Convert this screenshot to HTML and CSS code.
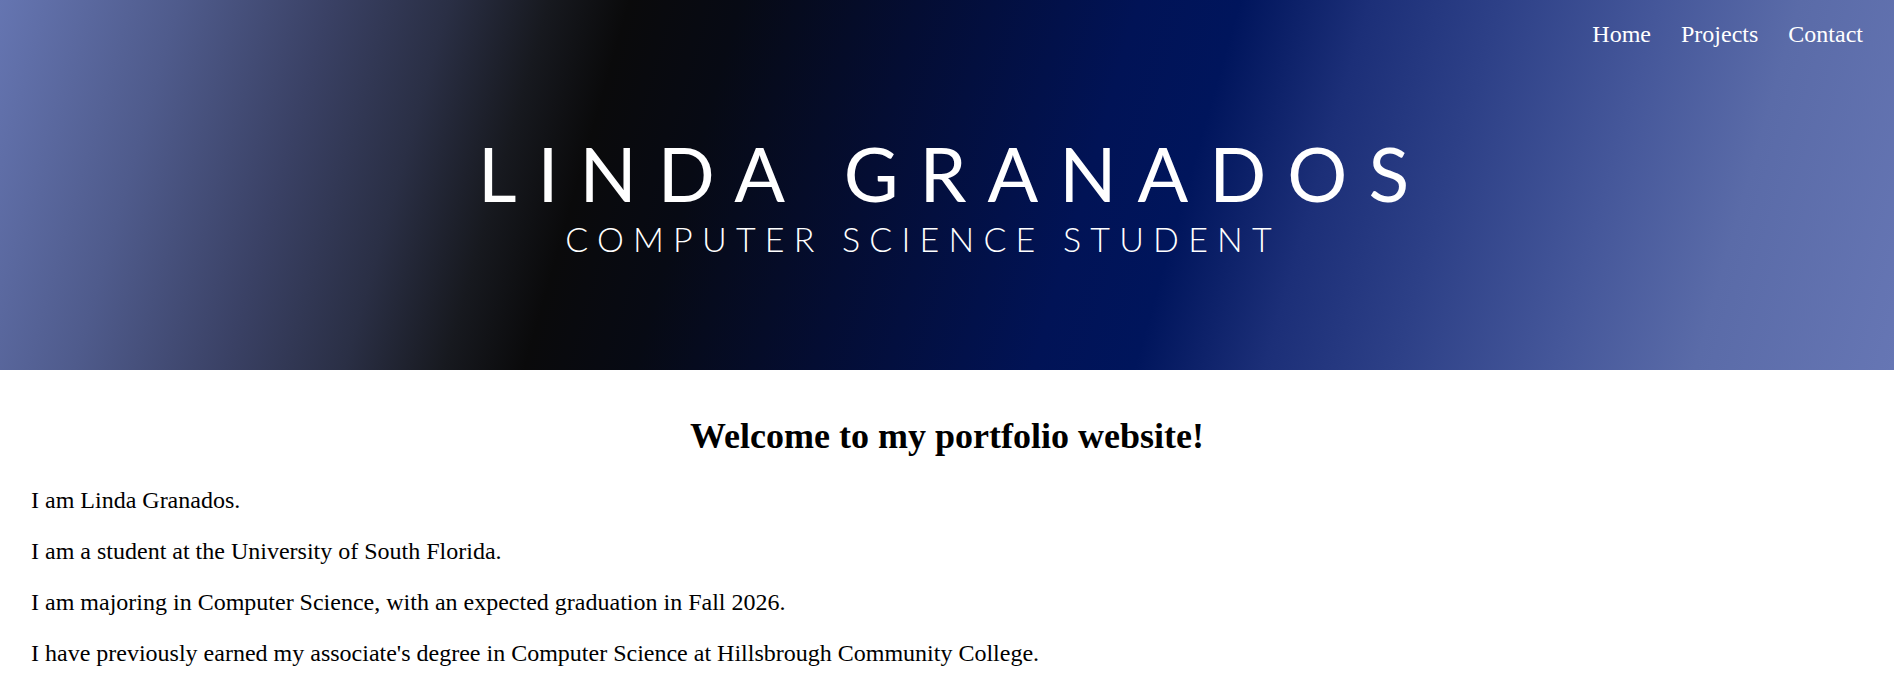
FILE: index.html
```html
<!DOCTYPE html>
<html lang="en">
<head>
<meta charset="utf-8">
<title>Linda Granados</title>
<link rel="stylesheet" href="styles.css">
</head>
<body>
<header class="hero">
  <nav class="nav">
    <a class="nav-link" href="#">Home</a>
    <a class="nav-link" href="#">Projects</a>
    <a class="nav-link" href="#">Contact</a>
  </nav>
  <div class="hero-text">
    <div class="hero-name">LINDA GRANADOS</div>
    <div class="hero-role">COMPUTER SCIENCE STUDENT</div>
  </div>
</header>
<main class="content">
  <h1 class="welcome">Welcome to my portfolio website!</h1>
  <p class="line">I am Linda Granados.</p>
  <p class="line">I am a student at the University of South Florida.</p>
  <p class="line">I am majoring in Computer Science, with an expected graduation in Fall 2026.</p>
  <p class="line">I have previously earned my associate's degree in Computer Science at Hillsbrough Community College.</p>
</main>
</body>
</html>
```

FILE: styles.css
```css
html, body {
  margin: 0;
  padding: 0;
}

body {
  font-family: "Liberation Serif", "Times New Roman", serif;
  font-size: 24px;
  color: #000;
  background: #fff;
}

.hero {
  height: 370px;
  display: flex;
  flex-direction: column;
  background: linear-gradient(106deg,
    #6575b1 0%,
    #4f5b8c 9%,
    #3a4165 16.5%,
    #2a2f45 22.5%,
    #17191f 27.5%,
    #0a0a0b 31.5%,
    #070a14 37%,
    #040d33 46%,
    #011356 57%,
    #00155c 62%,
    #1c2f78 68.5%,
    #2d4087 75%,
    #45579a 83%,
    #5a6ba8 90%,
    #6676b4 100%);
  color: #fff;
}

.nav {
  display: flex;
  justify-content: flex-end;
  gap: 30px;
  padding: 21px 31px 0 0;
}

.nav-link {
  color: #fff;
  text-decoration: none;
  font-size: 24px;
}

.hero-text {
  margin-top: 86px;
  display: flex;
  flex-direction: column;
  align-items: center;
}

.hero-name {
  font-family: "Lato", "DejaVu Sans", sans-serif;
  font-weight: 400;
  font-size: 75px;
  line-height: 78px;
  letter-spacing: 21px;
  padding-left: 14px;
}

.hero-role {
  margin-top: 7px;
  font-family: "Lato", "DejaVu Sans", sans-serif;
  font-weight: 300;
  font-size: 34px;
  line-height: 40px;
  letter-spacing: 9.2px;
  padding-right: 48px;
}

.content {
  padding: 15px 31px;
}

.welcome {
  margin: 30px 0;
  font-size: 36px;
  font-weight: bold;
  text-align: center;
}

.line {
  margin: 24px 0;
}
```
